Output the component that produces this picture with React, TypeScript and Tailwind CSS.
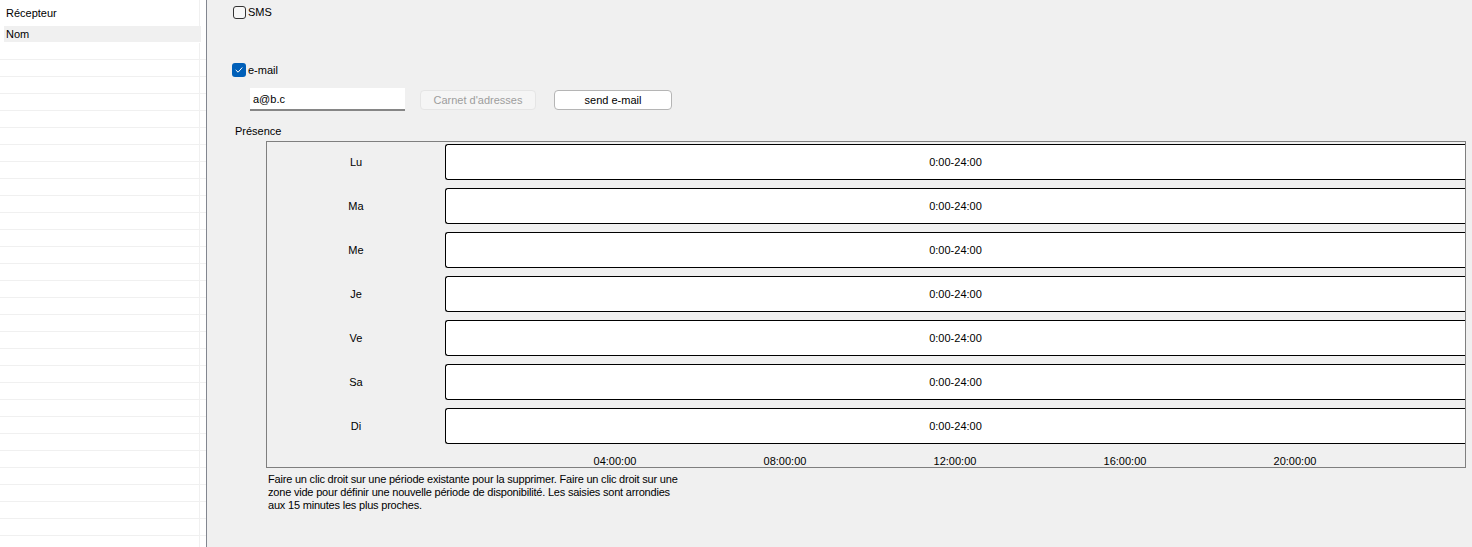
import React from "react";

const days = ["Lu", "Ma", "Me", "Je", "Ve", "Sa", "Di"];
const ticks = ["04:00:00", "08:00:00", "12:00:00", "16:00:00", "20:00:00"];

function ListRow() {
  return (
    <div className="h-[17px] shrink-0 border-b border-[#f0f0f0] w-full">
      <div className="h-full w-[200px] border-r border-[#f0f0f0]" />
    </div>
  );
}

export default function App() {
  const rows = Array.from({ length: 30 });
  return (
    <div
      className="flex w-[1472px] h-[547px] overflow-hidden bg-[#f0f0f0] text-[11px] text-black"
      style={{ fontFamily: '"Liberation Sans", Arial, sans-serif' }}
    >
      {/* Left panel */}
      <div className="w-[207px] h-full shrink-0 bg-white border-r border-[#82868f] flex flex-col overflow-hidden">
        <div className="h-[26px] shrink-0 w-[200px] border-r border-[#f0f0f0] flex items-center pl-[6px]">
          Récepteur
        </div>
        <div className="h-[17px] shrink-0 w-[201px] pl-[4px]">
          <div className="h-[16px] bg-[#f0f0f0] flex items-center pl-[2px]">Nom</div>
        </div>
        {rows.map((_, i) => (
          <ListRow key={i} />
        ))}
      </div>

      {/* Right area */}
      <div className="flex-1 flex flex-col">
        {/* SMS */}
        <div className="flex items-center mt-[6px] ml-[26px] h-[13px]">
          <div className="w-[13px] h-[13px] rounded-[3px] border border-[#333333] bg-[#f7f7f7]" />
          <span className="ml-[2px] leading-none">SMS</span>
        </div>

        {/* e-mail */}
        <div className="flex items-center mt-[44px] ml-[25px] h-[14px]">
          <div className="w-[14px] h-[14px] rounded-[3px] bg-[#005fb8] flex items-center justify-center">
            <svg width="10" height="10" viewBox="0 0 10 10" fill="none">
              <path d="M2 5.2 L4.1 7.2 L8 2.8" stroke="white" strokeWidth="1" strokeLinecap="round" strokeLinejoin="round" />
            </svg>
          </div>
          <span className="ml-[2px] leading-none">e-mail</span>
        </div>

        {/* input row */}
        <div className="flex items-start mt-[11px] ml-[43px]">
          <div className="w-[155px] h-[23px] bg-white border-b-2 border-[#868686] flex items-center pl-[3px] pt-[1px]">
            a@b.c
          </div>
          <button className="ml-[15px] mt-[2px] w-[116px] h-[20px] rounded-[4px] bg-[#f5f5f5] border border-[#e5e5e5] text-[#9d9d9d] flex items-center justify-center">
            Carnet d'adresses
          </button>
          <button className="ml-[18px] mt-[2px] w-[118px] h-[20px] rounded-[4px] bg-white border border-[#b5b5b5] text-black flex items-center justify-center">
            send e-mail
          </button>
        </div>

        {/* Présence label */}
        <div className="ml-[28px] mt-[12px] h-[16px] leading-none flex items-center">Présence</div>

        {/* Presence panel */}
        <div className="ml-[59px] mt-[2px] w-[1200px] h-[327px] border border-[#7f7f7f] flex flex-col overflow-hidden">
          <div className="flex flex-col gap-[8px] pt-[2px]">
            {days.map((d) => (
              <div key={d} className="flex h-[36px]">
                <div className="w-[178px] shrink-0 flex items-center justify-center">{d}</div>
                <div className="w-[1020px] shrink-0 bg-white border-y border-l border-black rounded-l-[3px] flex items-center justify-center">
                  0:00-24:00
                </div>
              </div>
            ))}
          </div>
          <div className="flex mt-[12px]">
            <div className="w-[178px] shrink-0" />
            <div className="w-[85px] shrink-0" />
            {ticks.map((t) => (
              <div key={t} className="w-[170px] shrink-0 text-center leading-none">
                {t}
              </div>
            ))}
          </div>
        </div>

        {/* help text */}
        <div className="ml-[61px] mt-[5px] w-[410px] leading-[13px] tracking-[-0.2px]">
          Faire un clic droit sur une période existante pour la supprimer. Faire un clic droit sur une
          zone vide pour définir une nouvelle période de disponibilité. Les saisies sont arrondies aux
          15 minutes les plus proches.
        </div>
      </div>
    </div>
  );
}
